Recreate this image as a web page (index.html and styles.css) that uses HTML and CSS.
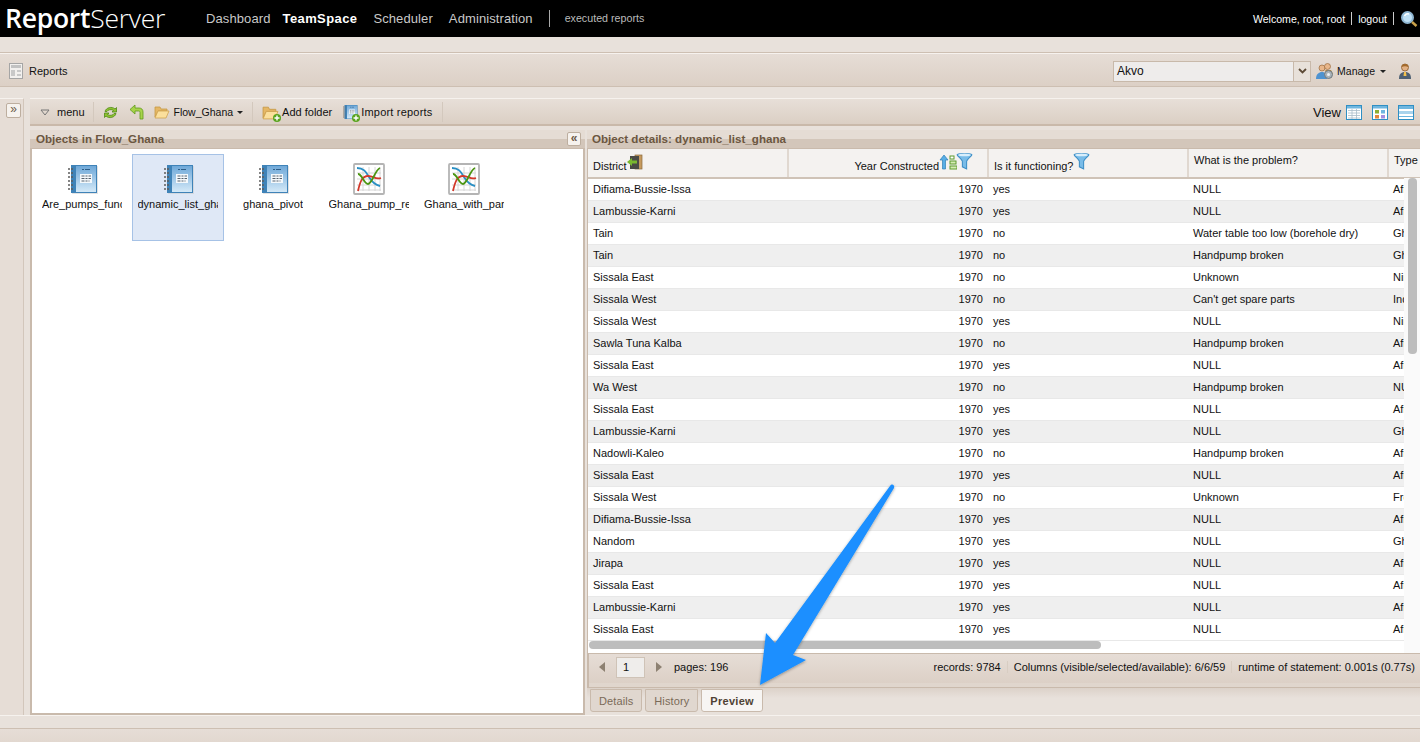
FILE: index.html
```html
<!DOCTYPE html>
<html lang="en">
<head>
    <meta charset="UTF-8">
    <meta name="viewport" content="width=device-width, initial-scale=1.0">
    <title>ReportServer - TeamSpace</title>
    <link rel="stylesheet" href="styles.css">
</head>
<body>

<svg class="defs" width="0" height="0">
    <defs>
        <linearGradient id="pageFill" x1="0" y1="0" x2="0" y2="1">
            <stop offset="0" stop-color="#6fa8d8"/>
            <stop offset="1" stop-color="#d4e9f8"/>
        </linearGradient>
        <symbol id="icoReport" viewBox="0 0 32 32">
            <rect x="6" y="3" width="26" height="28" fill="#c8c8c8" opacity=".5"/>
            <rect x="5" y="2" width="26" height="28" fill="#3f83b8"/>
            <rect x="10" y="3" width="20" height="26" fill="url(#pageFill)"/>
            <rect x="14" y="11" width="12" height="9" fill="#f4f8fb"/>
            <path d="M16 6.500h2M19 6.500h5" stroke="#2f5f8a" stroke-width="1"/>
            <path d="M15.500 13h3M19.500 13h2M22.500 13h2.500M15.500 15.500h3M19.500 15.500h2M22.500 15.500h2.500M15.500 18h3M19.500 18h2M22.500 18h1" stroke="#56626e" stroke-width="1"/>
            <path d="M2 6h5M2 10h5M2 14h5M2 18h5M2 22h5M2 26h5" stroke="#5c5c5c" stroke-width="1.500" stroke-dasharray="2 1"/>
        </symbol>
        <symbol id="icoChart" viewBox="0 0 32 32">
            <rect x="1" y="1" width="30" height="30" rx="1" fill="#fff" stroke="#b4b4b4" stroke-width="1.800"/>
            <path d="M4 10h24M4 16h24M4 22h24M4 27h24M10 4v24M16 4v24M22 4v24M27 4v24" stroke="#d6d6d6" stroke-width="1"/>
            <path d="M4 5c7 0 9 4 12 9s6 8 11 9" fill="none" stroke="#2a8fc4" stroke-width="1.800"/>
            <path d="M5 28c2-9 4-15 10-15s7 4 13 2" fill="none" stroke="#d3382a" stroke-width="1.800"/>
            <path d="M5 11c4 0 6 10 10 10s7-14 12-16" fill="none" stroke="#4c9612" stroke-width="1.800"/>
        </symbol>
        <symbol id="icoFilter" viewBox="0 0 16 17">
            <path d="M1 2.500C1 1 15 1 15 2.500c0 1-5 5-5 6.500v7l-4-2V9C6 7.500 1 3.500 1 2.500z" fill="#79bce8" stroke="#3d8fc6"/>
            <ellipse cx="8" cy="2.800" rx="6" ry="1.300" fill="#d8eefb"/>
        </symbol>
        <symbol id="icoPlus" viewBox="0 0 8 8">
            <circle cx="4" cy="4" r="4" fill="#5aa41f"/>
            <path d="M4 1.500v5M1.500 4h5" stroke="#fff" stroke-width="1.400"/>
        </symbol>
        <symbol id="icoFolder" viewBox="0 0 16 14">
            <path d="M1 2h5l1 2h6v2H4L1 12z" fill="#e5b765" stroke="#c79a45" stroke-width=".8"/>
            <path d="M1 13l3-7h11l-3 7z" fill="#fbdf9c" stroke="#d0a350" stroke-width=".8"/>
        </symbol>
    </defs>
</svg>

<header class="topbar">
    <div class="logo"><b>Report</b>Server</div>
    <nav class="mainnav">
        <a>Dashboard</a>
        <a class="active">TeamSpace</a>
        <a>Scheduler</a>
        <a>Administration</a>
        <span class="navsub">executed reports</span>
    </nav>
    <div class="userbox">
        <span>Welcome, root, root</span>
        <span class="sep"></span>
        <span>logout</span>
        <span class="sep"></span>
        <svg width="18" height="18" viewBox="0 0 18 18">
            <circle cx="7.500" cy="7.500" r="5.500" fill="#bfe0f5" stroke="#8fb6d2" stroke-width="2"/>
            <path d="M4.500 6c1-2 3-2.500 4.500-2" stroke="#fff" stroke-width="1.500" fill="none"/>
            <path d="M12 12l4.500 4" stroke="#c9a14a" stroke-width="2.500"/>
        </svg>
    </div>
</header>

<div class="reportsbar">
    <svg class="reportsico" width="16" height="16" viewBox="0 0 16 16">
        <rect x=".5" y=".5" width="13" height="15" fill="#f2f0ee" stroke="#a5a5a5"/>
        <rect x="2" y="2" width="10" height="3" fill="#c2c2c2"/>
        <path d="M2 7h4v6H2zM8 7h4v2H8zM8 11h4v2H8z" fill="#c8c8c8"/>
    </svg>
    <span>Reports</span>
    <div class="reportsright">
        <div class="combo">
            <span class="combovalue">Akvo</span>
            <span class="comboarrow">
                <svg width="9" height="6" viewBox="0 0 9 6"><path d="M1 1l3.500 3.500L8 1" fill="none" stroke="#5d4a36" stroke-width="1.800"/></svg>
            </span>
        </div>
        <span class="managebtn">
            <svg width="18" height="18" viewBox="0 0 18 18">
                <circle cx="6" cy="6" r="3" fill="#e8b68a" stroke="#9a6a3c" stroke-width=".7"/>
                <circle cx="11.500" cy="4.500" r="3" fill="#e8b68a" stroke="#9a6a3c" stroke-width=".7"/>
                <path d="M0 17c0-5 3-7 6-7s5 2 5 7z" fill="#4f93d0"/>
                <path d="M9 8h6l2 4-4 1z" fill="#b7822f"/>
                <circle cx="12.500" cy="12.500" r="4" fill="#a9b2b8" stroke="#70797f"/>
                <circle cx="12.500" cy="12.500" r="1.500" fill="#eef1f3"/>
            </svg>
            <span class="managelabel">Manage</span> <i class="caret"></i>
        </span>
        <svg class="usericon" width="14" height="17" viewBox="0 0 14 17">
            <circle cx="7" cy="4.500" r="3.500" fill="#e2b184" stroke="#8a5a2b" stroke-width=".8"/>
            <path d="M3.500 4c0-4 7-4 7 0-2-1-5-1-7 0z" fill="#a36a2b"/>
            <path d="M1 16c0-5 2-7 6-7s6 2 6 7z" fill="#4d5f72"/>
            <path d="M6 9h2l.5 4h-3z" fill="#f2c14e"/>
        </svg>
    </div>
</div>

<div class="workspace">
    <aside class="sidestrip">
        <span class="collapsebtn">&raquo;</span>
    </aside>

    <main class="content">
        <div class="toolbar">
            <span class="tool menubtn">
                <svg width="10" height="7" viewBox="0 0 10 7"><path d="M1 1h8L5 6z" fill="none" stroke="#777" stroke-width="1"/></svg>
                menu
            </span>
            <span class="toolsep"></span>
            <svg class="tool" width="15" height="15" viewBox="0 0 15 15">
                <path d="M2 6.500C3 2.500 9 1 12 4l1.500-1.500V7H9l1.500-1.500C8.500 4 5 4.500 4 6.500zM13 8.500C12 12.500 6 14 3 11l-1.500 1.500V8H6l-1.500 1.500C6.500 11 10 10.500 11 8.500z" fill="#8fc231" stroke="#4f8a16" stroke-width=".8"/>
            </svg>
            <svg class="tool" width="15" height="16" viewBox="0 0 15 16">
                <path d="M1 5.500L6 1v3h4c2.500 0 4 1.500 4 4v7h-3V8.500C11 7.500 10.500 7 9.500 7H6v3z" fill="#a8d34a" stroke="#5f9a1c" stroke-width=".8"/>
            </svg>
            <span class="tool folderbtn">
                <svg width="16" height="14"><use href="#icoFolder"/></svg>
                <span class="foldername">Flow_Ghana</span> <i class="caret dark"></i>
            </span>
            <span class="toolsep"></span>
            <span class="tool addbtn">
                <span class="iconwrap">
                    <svg width="17" height="15"><use href="#icoFolder"/></svg>
                    <svg class="plus" width="8" height="8"><use href="#icoPlus"/></svg>
                </span>
                Add folder
            </span>
            <span class="tool addbtn importbtn">
                <span class="iconwrap">
                    <svg width="16" height="16"><use href="#icoReport"/></svg>
                    <svg class="plus" width="8" height="8"><use href="#icoPlus"/></svg>
                </span>
                Import reports
            </span>
            <span class="toolsep"></span>
            <div class="viewbox">
                <span class="viewlabel">View</span>
                <svg width="16" height="15" viewBox="0 0 16 15">
                    <rect x=".5" y=".5" width="15" height="14" fill="#fff" stroke="#2f8fc4"/>
                    <rect x="1" y="1" width="14" height="2.500" fill="#6fb6df"/>
                    <path d="M2 5.500h12M2 8h12M2 10.500h12M2 13h12M6 4v10M10.500 4v10" stroke="#a9bcc9" stroke-width=".8"/>
                </svg>
                <svg width="16" height="15" viewBox="0 0 16 15">
                    <rect x=".5" y=".5" width="15" height="14" fill="#fff" stroke="#2f8fc4"/>
                    <rect x="1" y="1" width="14" height="2.500" fill="#6fb6df"/>
                    <rect x="3" y="5" width="4" height="3.500" fill="#8fae32"/>
                    <rect x="9" y="5" width="4" height="3.500" fill="#6fb6df"/>
                    <rect x="3" y="10" width="4" height="3.500" fill="#e4863a"/>
                    <rect x="9" y="10" width="4" height="3.500" fill="#a58fe0"/>
                </svg>
                <svg width="16" height="15" viewBox="0 0 16 15">
                    <rect x=".5" y=".5" width="15" height="14" fill="#fff" stroke="#2f8fc4"/>
                    <rect x="1" y="1" width="14" height="3" fill="#6fb6df"/>
                    <rect x="1" y="6" width="14" height="3" fill="#a9d3ec"/>
                    <path d="M1 11.500h14" stroke="#6fb6df"/>
                </svg>
            </div>
        </div>

        <div class="panels">
            <section class="leftpanel">
                <div class="panelhead">
                    <span>Objects in Flow_Ghana</span>
                    <span class="collapsebtn small">&laquo;</span>
                </div>
                <div class="objects">
                    <div class="obj">
                        <svg width="32" height="32"><use href="#icoReport"/></svg>
                        <span class="objname">Are_pumps_func</span>
                    </div>
                    <div class="obj selected">
                        <svg width="32" height="32"><use href="#icoReport"/></svg>
                        <span class="objname">dynamic_list_gha</span>
                    </div>
                    <div class="obj">
                        <svg width="32" height="32"><use href="#icoReport"/></svg>
                        <span class="objname">ghana_pivot</span>
                    </div>
                    <div class="obj">
                        <svg width="32" height="32"><use href="#icoChart"/></svg>
                        <span class="objname">Ghana_pump_re</span>
                    </div>
                    <div class="obj">
                        <svg width="32" height="32"><use href="#icoChart"/></svg>
                        <span class="objname">Ghana_with_par</span>
                    </div>
                </div>
            </section>

            <section class="rightpanel">
                <div class="panelhead">
                    <span>Object details: dynamic_list_ghana</span>
                </div>
                <div class="gridwrap">
                    <table class="grid">
                        <colgroup>
                            <col class="c1"><col class="c2"><col class="c3"><col class="c4"><col class="c5">
                        </colgroup>
                        <thead>
                            <tr>
                                <th>District<svg class="doorico" width="16" height="16" viewBox="0 0 16 16">
                                    <rect x="8" y="1" width="7" height="14" fill="#c69a5e" stroke="#8a6a3c" stroke-width=".7"/>
                                    <rect x="3" y="2" width="9" height="13" fill="#4a4a44"/>
                                    <path d="M0 8l5-4v2.500h5v3H5V12z" fill="#7ab82e"/>
                                </svg></th>
                                <th class="num">Year Constructed<svg class="sortico" width="18" height="16" viewBox="0 0 18 16">
                                    <path d="M5 1l4 5H6.500v9h-3V6H1z" fill="#58aee6" stroke="#2f7fb6" stroke-width=".7"/>
                                    <rect x="11" y="2" width="4" height="3" fill="#fff" stroke="#5c9a2c"/>
                                    <rect x="11" y="7" width="6" height="3" fill="#d5ecb5" stroke="#5c9a2c"/>
                                    <rect x="11" y="12" width="7" height="3" fill="#d5ecb5" stroke="#5c9a2c"/>
                                </svg><svg class="filterico" width="17" height="18"><use href="#icoFilter"/></svg></th>
                                <th>Is it functioning?<svg class="filterico" width="17" height="18"><use href="#icoFilter"/></svg></th>
                                <th class="top">What is the problem?</th>
                                <th class="top">Type of water point</th>
                            </tr>
                        </thead>
                        <tbody>
                            <tr><td>Difiama-Bussie-Issa</td><td class="num">1970</td><td>yes</td><td>NULL</td><td>Afridev</td></tr>
                            <tr><td>Lambussie-Karni</td><td class="num">1970</td><td>yes</td><td>NULL</td><td>Afridev</td></tr>
                            <tr><td>Tain</td><td class="num">1970</td><td>no</td><td>Water table too low (borehole dry)</td><td>Ghana</td></tr>
                            <tr><td>Tain</td><td class="num">1970</td><td>no</td><td>Handpump broken</td><td>Ghana</td></tr>
                            <tr><td>Sissala East</td><td class="num">1970</td><td>no</td><td>Unknown</td><td>Nira</td></tr>
                            <tr><td>Sissala West</td><td class="num">1970</td><td>no</td><td>Can't get spare parts</td><td>India</td></tr>
                            <tr><td>Sissala West</td><td class="num">1970</td><td>yes</td><td>NULL</td><td>Nira</td></tr>
                            <tr><td>Sawla Tuna Kalba</td><td class="num">1970</td><td>no</td><td>Handpump broken</td><td>Afridev</td></tr>
                            <tr><td>Sissala East</td><td class="num">1970</td><td>yes</td><td>NULL</td><td>Afridev</td></tr>
                            <tr><td>Wa West</td><td class="num">1970</td><td>no</td><td>Handpump broken</td><td>NULL</td></tr>
                            <tr><td>Sissala East</td><td class="num">1970</td><td>yes</td><td>NULL</td><td>Afridev</td></tr>
                            <tr><td>Lambussie-Karni</td><td class="num">1970</td><td>yes</td><td>NULL</td><td>Ghana</td></tr>
                            <tr><td>Nadowli-Kaleo</td><td class="num">1970</td><td>no</td><td>Handpump broken</td><td>Afridev</td></tr>
                            <tr><td>Sissala East</td><td class="num">1970</td><td>yes</td><td>NULL</td><td>Afridev</td></tr>
                            <tr><td>Sissala West</td><td class="num">1970</td><td>no</td><td>Unknown</td><td>Free</td></tr>
                            <tr><td>Difiama-Bussie-Issa</td><td class="num">1970</td><td>yes</td><td>NULL</td><td>Afridev</td></tr>
                            <tr><td>Nandom</td><td class="num">1970</td><td>yes</td><td>NULL</td><td>Ghana</td></tr>
                            <tr><td>Jirapa</td><td class="num">1970</td><td>yes</td><td>NULL</td><td>Afridev</td></tr>
                            <tr><td>Sissala East</td><td class="num">1970</td><td>yes</td><td>NULL</td><td>Afridev</td></tr>
                            <tr><td>Lambussie-Karni</td><td class="num">1970</td><td>yes</td><td>NULL</td><td>Afridev</td></tr>
                            <tr><td>Sissala East</td><td class="num">1970</td><td>yes</td><td>NULL</td><td>Afridev</td></tr>
                        </tbody>
                    </table>
                    <div class="vscroll"><span class="vthumb"></span></div>
                    <div class="hscroll"></div>
                </div>
                <div class="pager">
                    <i class="pagetri left"></i>
                    <span class="pageinput">1</span>
                    <i class="pagetri right"></i>
                    <span class="pagecount">pages: 196</span>
                    <div class="pagerright">
                        <span>records: 9784</span>
                        <span>Columns (visible/selected/available): 6/6/59</span>
                        <span>runtime of statement: 0.001s (0.77s)</span>
                    </div>
                </div>
                <div class="tabs">
                    <span class="tab">Details</span>
                    <span class="tab">History</span>
                    <span class="tab active">Preview</span>
                </div>
            </section>
        </div>
    </main>
</div>

<footer class="bottombar"></footer>

<!-- blue annotation arrow drawn on top of the screenshot -->
<svg class="arrow" width="170" height="230" viewBox="0 0 170 230">
    <defs>
        <filter id="arrowShadow" x="-10%" y="-10%" width="120%" height="120%">
            <feDropShadow dx="0" dy="1" stdDeviation="1.500" flood-color="#000" flood-opacity=".35"/>
        </filter>
    </defs>
    <path d="M20 215L26 163L35 173L150 16C152 13 155 15 154 18L53 185L66 190z" fill="#1a8fff" filter="url(#arrowShadow)"/>
</svg>

</body>
</html>
```

FILE: styles.css
```css
html, body {
    margin: 0;
    height: 742px;
    overflow: hidden;
}

body {
    position: relative;
    background: #e8e1db;
    color: #111;
    font-family: "Liberation Sans", Arial, sans-serif;
    font-size: 11px;
    display: flex;
    flex-direction: column;
}

.defs {
    position: absolute;
}

/* top black bar */
.topbar {
    height: 37px;
    flex: none;
    background: #000;
    color: #fff;
    display: flex;
    align-items: center;
}

.logo {
    font-family: "Open Sans", sans-serif;
    font-size: 26.500px;
    font-weight: 300;
    letter-spacing: -.25px;
    margin-left: 5px;
    width: 201px;
    line-height: 37px;
}

.logo b {
    font-weight: 600;
}

.mainnav {
    display: flex;
    align-items: center;
    font-size: 13px;
    letter-spacing: .1px;
    color: #c9c9c9;
}

.mainnav a {
    margin-right: 16px;
}

.mainnav a.active {
    color: #fff;
    font-weight: bold;
    letter-spacing: .4px;
    margin-left: -4px;
}

.navsub {
    font-size: 10.700px;
    letter-spacing: 0;
    color: #bbb;
    border-left: 1px solid #aaa;
    padding-left: 15px;
    line-height: 17px;
    height: 17px;
}

.userbox {
    margin-left: auto;
    display: flex;
    align-items: center;
    gap: 6px;
    padding-right: 2px;
    font-size: 10.600px;
}

.sep {
    width: 1px;
    height: 13px;
    background: #ccc;
}

/* reports bar */
.reportsbar {
    flex: none;
    height: 32px;
    box-sizing: content-box;
    margin-top: 16px;
    border-top: 1px solid #f6f2ee;
    border-bottom: 1px solid #cdbfb2;
    background: linear-gradient(#e6ddd6, #dcd0c6);
    display: flex;
    align-items: center;
    padding-left: 9px;
    box-shadow: 0 -1px 0 #cdbfb2;
}

.reportsbar > span,
.reportsico,
.reportsright {
    position: relative;
    top: 1px;
}

.reportsico {
    margin-right: 4px;
}

.reportsright {
    margin-left: auto;
    display: flex;
    align-items: center;
}

.combo {
    width: 198px;
    height: 21px;
    box-sizing: border-box;
    border: 1px solid #c8b9aa;
    background: #eeeceb;
    display: flex;
    align-items: center;
    font-size: 12px;
}

.combovalue {
    flex: 1;
    padding-left: 3px;
}

.comboarrow {
    width: 16px;
    height: 100%;
    border-left: 1px solid #c8b9aa;
    background: #e8e1da;
    display: flex;
    align-items: center;
    justify-content: center;
}

.managebtn {
    display: flex;
    align-items: center;
    gap: 4px;
    margin-left: 5px;
}

.managelabel {
    font-size: 10.500px;
    margin-left: -1px;
}

.caret {
    display: inline-block;
    border-left: 3px solid transparent;
    border-right: 3px solid transparent;
    border-top: 3px solid #222;
    margin-left: 1px;
}

.usericon {
    margin-left: 12px;
    margin-right: 8px;
}

/* workspace */
.workspace {
    flex: none;
    display: flex;
    margin-top: 11px;
    height: 618px;
    box-sizing: border-box;
    border-bottom: 1px solid #f6f2ee;
}

.sidestrip {
    width: 24px;
    flex: none;
    box-sizing: border-box;
    border-top: 1px solid #f6f2ee;
    border-right: 1px solid #d2c6bb;
    padding: 4px 0 0 6px;
    margin-right: 6px;
    background: #e6ddd6;
}

.collapsebtn {
    display: block;
    width: 15px;
    height: 15px;
    box-sizing: border-box;
    border: 1px solid #bdae9f;
    border-radius: 2px;
    background: #f6f2ee;
    color: #6b5a48;
    font-size: 12px;
    line-height: 11px;
    text-align: center;
}

.content {
    flex: 1;
    min-width: 0;
    display: flex;
    flex-direction: column;
}

.toolbar {
    height: 28px;
    flex: none;
    box-sizing: border-box;
    border-top: 1px solid #f6f2ee;
    border-bottom: 2px solid #c9b9aa;
    background: linear-gradient(#e7dfd8, #dbcfc4);
    display: flex;
    align-items: center;
    padding: 1px 0 0 10px;
}

.tool {
    display: flex;
    align-items: center;
    flex: none;
}

.menubtn {
    gap: 7px;
}

.toolsep {
    width: 1px;
    height: 20px;
    background: #d3c8bd;
    margin: 0 9px 0 8px;
}

.toolbar svg.tool {
    margin-right: 11px;
}

.folderbtn {
    gap: 4px;
    margin: 0 1px 0 -1px;
}

.foldername {
    font-size: 10.500px;
}

.caret.dark {
    margin-left: 0;
}

.addbtn {
    gap: 3px;
    margin-right: 9px;
}

.importbtn {
    margin-left: 1px;
    letter-spacing: .2px;
}

.addbtn + .toolsep {
    margin-left: 0;
}

.iconwrap {
    position: relative;
    display: flex;
}

.plus {
    position: absolute;
    right: -2px;
    bottom: -2px;
}

.viewbox {
    margin-left: auto;
    display: flex;
    align-items: center;
    gap: 10px;
    padding-right: 6px;
}

.viewlabel {
    font-size: 13px;
    margin-right: -5px;
}

/* panels */
.panels {
    flex: 1;
    display: flex;
    min-height: 0;
    margin-top: 4px;
}

.panelhead {
    height: 18px;
    flex: none;
    box-sizing: border-box;
    background: linear-gradient(#e5dcd4 50%, #d3c6ba 50%);
    color: #6b5640;
    font-size: 11.600px;
    font-weight: bold;
    display: flex;
    align-items: center;
    justify-content: space-between;
    padding: 0 5px 2px 6px;
}

.rightpanel .panelhead {
    padding-left: 5px;
}

.collapsebtn.small {
    margin: 2px -1px 0 0;
    width: 14px;
    height: 14px;
}

.leftpanel {
    width: 555px;
    flex: none;
    display: flex;
    flex-direction: column;
    box-sizing: border-box;
    height: 585px;
}

.objects {
    flex: 1;
    box-sizing: border-box;
    background: #fff;
    border: 2px solid #c9baac;
    border-top: 1px solid #c9baac;
    display: flex;
    align-items: flex-start;
    padding: 5px 0 0 4px;
    gap: 3.500px;
}

.obj {
    width: 92px;
    height: 87px;
    box-sizing: border-box;
    padding-top: 8px;
    border: 1px solid transparent;
    display: flex;
    flex-direction: column;
    align-items: center;
    gap: 3px;
}

.obj.selected {
    background: #dfe8f6;
    border-color: #a6c2e6;
}

/* long names are clipped in the icon view */
.objname {
    display: block;
    max-width: 80px;
    overflow: hidden;
    white-space: nowrap;
}

.rightpanel {
    flex: 1;
    min-width: 0;
    margin-left: 2px;
    display: flex;
    flex-direction: column;
}

.gridwrap {
    position: relative;
    height: 505px;
    flex: none;
    background: #fff;
    overflow: hidden;
    border-left: 1px solid #c9baac;
    border-top: 1px solid #c9baac;
    box-sizing: border-box;
}

.grid {
    table-layout: fixed;
    border-collapse: collapse;
    width: 1000px;
}

.c1, .c2, .c3, .c4, .c5 {
    width: 200px;
}

.grid th {
    height: 29px;
    padding: 0 5px 5px;
    box-sizing: border-box;
    background: #f4f2f0;
    border-right: 2px solid #e0d8d0;
    border-bottom: 2px solid #cfc3b7;
    font-weight: normal;
    text-align: left;
    vertical-align: bottom;
    white-space: nowrap;
}

.grid th.top {
    vertical-align: top;
    padding-top: 5px;
    padding-bottom: 0;
}

.grid th.num {
    text-align: right;
    padding-right: 14px;
}

.grid th svg {
    vertical-align: 0;
}

.filterico {
    margin-top: -6px;
    margin-left: -1px;
}

.grid td {
    height: 22px;
    padding: 0 5px;
    box-sizing: border-box;
    border-bottom: 1px solid #e8e8e8;
    white-space: nowrap;
    overflow: hidden;
}

.grid tbody tr:nth-child(even) td {
    background: #efefef;
}

.grid td.num {
    text-align: right;
}

.vscroll {
    position: absolute;
    top: 29px;
    right: 0;
    bottom: 0;
    width: 16px;
    background: #fafafa;
}

.vthumb {
    display: block;
    width: 9px;
    height: 176px;
    margin-left: 4px;
    border-radius: 4px;
    background: #bdbdbd;
}

.hscroll {
    position: absolute;
    left: 1px;
    bottom: 4px;
    width: 512px;
    height: 8px;
    border-radius: 4px;
    background: #bdbdbd;
}

.pager {
    height: 34px;
    flex: none;
    box-sizing: border-box;
    border-top: 1px solid #c9baac;
    background: linear-gradient(#e6ddd6, #dcd0c6 88%, #e0d6cd 88%);
    border-left: 2px solid #c9baac;
    display: flex;
    align-items: center;
    padding: 0 0 7px 10px;
}

.pagetri {
    border-top: 5px solid transparent;
    border-bottom: 5px solid transparent;
}

.pagetri.left {
    border-right: 6px solid #8d8172;
}

.pagetri.right {
    border-left: 6px solid #8d8172;
}

.pageinput {
    width: 29px;
    height: 21px;
    box-sizing: border-box;
    margin: 0 11px 0 11px;
    border: 1px solid #cfc3b7;
    background: #efedeb;
    line-height: 19px;
    padding-left: 6px;
}

.pagecount {
    margin-left: 12px;
}

.pagerright {
    margin-left: auto;
    display: flex;
    margin-right: -1px;
}

.pagerright span {
    padding: 0 6px;
    border-left: 1px solid #d8cdc2;
}

.pagerright span:first-child {
    border-left: 0;
}

.tabs {
    flex: none;
    display: flex;
    gap: 3px;
    padding: 1px 0 0 3px;
    height: 28px;
    box-sizing: border-box;
    border-top: 1px solid #c9baac;
    background: linear-gradient(#dcd2c9, #e8e1db 10px);
}

.tab {
    height: 23px;
    box-sizing: border-box;
    padding: 0 8px;
    border: 1px solid #c9baac;
    border-radius: 0 0 3px 3px;
    background: #e0d7cf;
    color: #7a6a58;
    line-height: 22px;
    letter-spacing: .1px;
}

.tab.active {
    background: #f7f5f3;
    color: #4f4234;
    font-weight: bold;
    letter-spacing: .3px;
}

.bottombar {
    margin-top: 12px;
    flex: 1;
    border-top: 1px solid #cdbfb2;
    background: linear-gradient(#e6ddd6, #e2d8d0);
}

.arrow {
    position: absolute;
    left: 740px;
    top: 470px;
}
```
